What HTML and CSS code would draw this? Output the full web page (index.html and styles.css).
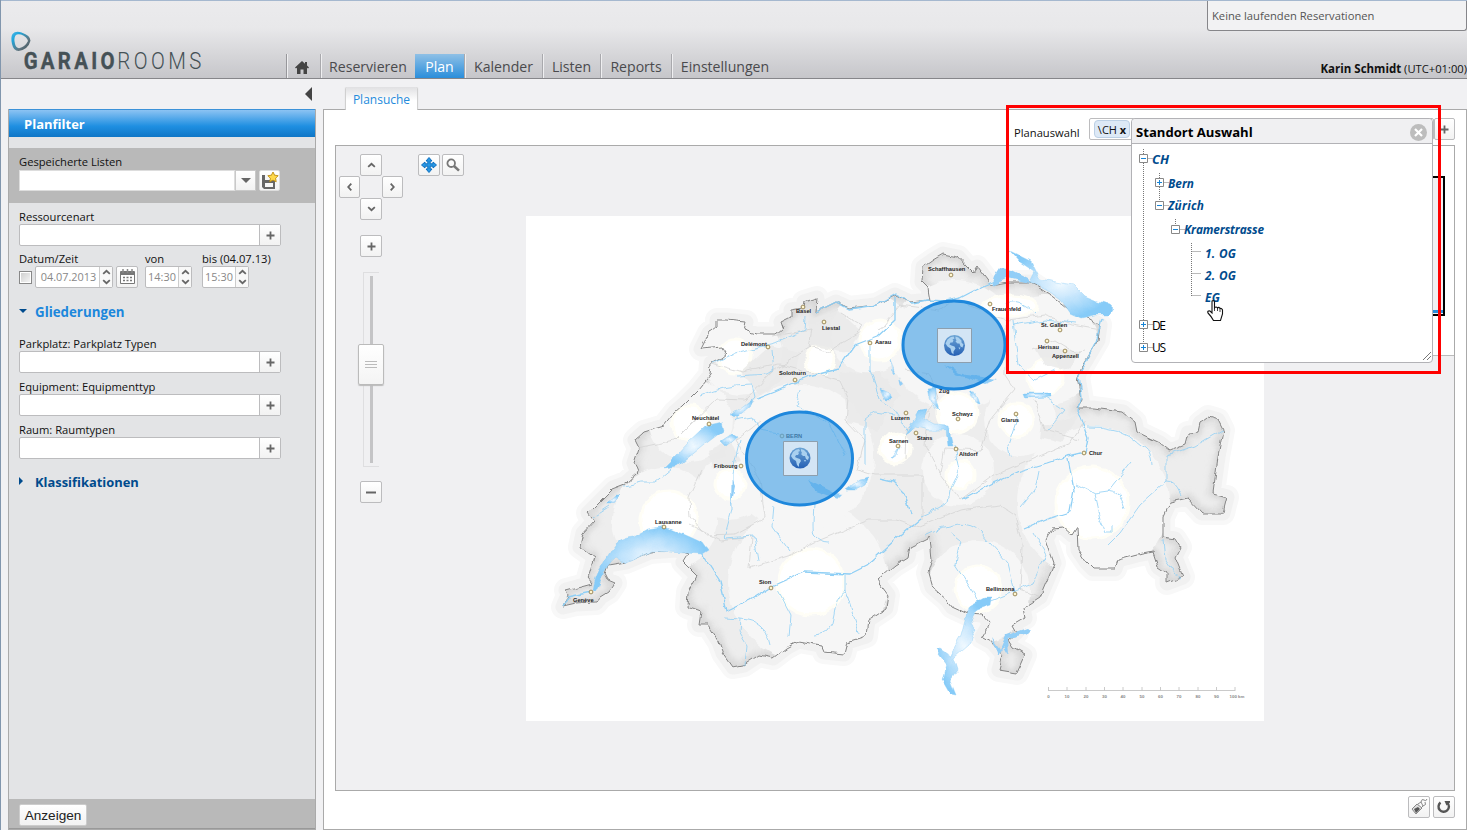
FILE: index.html
```html
<!DOCTYPE html>
<html lang="de">
<head>
<meta charset="utf-8">
<title>GARAIO ROOMS – Plan</title>
<link rel="stylesheet" href="styles.css">
</head>
<body>
<svg class="defs" aria-hidden="true">
  <symbol id="plus" viewBox="0 0 9 9"><path d="M4.5 .5v8M.5 4.5h8" stroke="#666" stroke-width="1.800"/></symbol>
  <symbol id="up" viewBox="0 0 10 6"><path d="M1.3 5 5 1.6 8.7 5" fill="none" stroke="#666" stroke-width="2"/></symbol>
  <symbol id="globe" viewBox="0 0 22 22">
    <circle cx="11" cy="11" r="10.500" fill="url(#gl)"/>
    <path d="M4 5q3-3 6-3l1 2-2 1 1 1-1 2-2 0-1 2 2 1 3 1 1 2-2 3 0 3-2-2-1-4-3-2-2-3zM12 2l3 1 3 3 0 2 2 2-1 3-2-1-1-3-2 0-2-2 1-1-1-2zM15 13l2 0-1 2z" fill="#a9d0ef"/>
  </symbol>
  <linearGradient id="gl" x2="0" y2="1"><stop stop-color="#6da5d5"/><stop offset="1" stop-color="#2560b4"/></linearGradient>
</svg>
<header class="header">
  <svg class="logo" width="200" height="46" viewBox="8 28 200 46">
    <defs><linearGradient id="lg" x1="0" x2="1" y2="1"><stop stop-color="#4fb8e8"/><stop offset=".25" stop-color="#1fa5db"/><stop offset=".65" stop-color="#607782"/><stop offset="1" stop-color="#37464c"/></linearGradient></defs>
    <path fill-rule="evenodd" fill="url(#lg)" d="M12.500 34q3-3.500 9-1.500q9 3 9 8.300q-2.500 9-12 10.200q-5 0-6.500-7q-1.500-7 .5-10zM15.500 35.500q-2 3-.5 8.500q1 4 4 4.200q6-1.200 9-7.200q-1-4.500-7-6.500q-4-1-5.500 1z"/>
    <g transform="scale(.85 1)"><text x="27.800" y="69.500" textLength="107" class="logo-b">GARAIO</text>
    <text x="138" y="69.500" textLength="99" class="logo-l">ROOMS</text></g>
  </svg>
  <nav class="nav">
    <a class="home"><svg width="14" height="13" viewBox="0 0 14 13"><path d="M7 0 0 6.500 1 7.500 2 6.800V13H5.500V8.500h3V13H12V6.800l1 .7 1-1L12 4.500V1H10v1.800z" fill="#444"/></svg></a>
    <a class="n1">Reservieren</a><a class="n2 active">Plan</a><a class="n3">Kalender</a><a class="n4">Listen</a><a class="n5">Reports</a><a class="n6">Einstellungen</a>
  </nav>
  <div class="notice">Keine laufenden Reservationen</div>
  <div class="user"><b>Karin Schmidt</b> (UTC+01:00)</div>
</header>
<main class="main">
  <div class="side">
    <div class="collapse"><i></i></div>
    <aside class="filter">
      <h2>Planfilter</h2>
      <div class="saved">
        <label>Gespeicherte Listen</label>
        <div class="row">
          <div class="select"><span></span><button><i class="caret"></i></button></div>
          <button class="sq save"><svg width="20" height="20" viewBox="0 0 20 20"><path d="M2 4h13v14H4l-2-2z" fill="#666"/><path d="M5 4h6v5H5zM5 12h8v4H5z" fill="#f7f7f7"/><path d="M13 1l1.600 3.200 3.600.5-2.600 2.500.6 3.600-3.200-1.700-3.200 1.700.6-3.600L7.800 4.700l3.600-.5z" fill="#ffd94a" stroke="#bd8c10" stroke-width=".9"/></svg></button>
        </div>
      </div>
      <div class="fields">
        <label class="l1">Ressourcenart</label>
        <div class="pick"><span></span><button><svg width="9" height="9"><use href="#plus"/></svg></button></div>
        <div class="labels"><label>Datum/Zeit</label><label>von</label><label>bis (04.07.13)</label></div>
        <div class="row when">
          <i class="check"></i>
          <div class="spin date"><span>04.07.2013</span><em><svg width="9" height="6"><use href="#up"/></svg><svg class="dn" width="9" height="6"><use href="#up"/></svg></em></div>
          <button class="sq cal"><svg width="15" height="16" viewBox="0 0 15 16"><path d="M.5 2.500h14v12H.5z" fill="#fff" stroke="#777"/><path d="M1 3h13v3H1z" fill="#777"/><path d="M3 0v4M7.500 0v4M12 0v4" stroke="#888" stroke-width="1.500"/><path d="M3 8.500h2M6.500 8.500h2M10 8.500h2M3 11.500h2M6.500 11.500h2M10 11.500h2" stroke="#777" stroke-width="1.700"/></svg></button>
          <div class="spin t1"><span>14:30</span><em><svg width="9" height="6"><use href="#up"/></svg><svg class="dn" width="9" height="6"><use href="#up"/></svg></em></div>
          <div class="spin t2"><span>15:30</span><em><svg width="9" height="6"><use href="#up"/></svg><svg class="dn" width="9" height="6"><use href="#up"/></svg></em></div>
        </div>
        <h3 class="open"><i></i>Gliederungen</h3>
        <label class="l2">Parkplatz: Parkplatz Typen</label>
        <div class="pick"><span></span><button><svg width="9" height="9"><use href="#plus"/></svg></button></div>
        <label class="l3">Equipment: Equipmenttyp</label>
        <div class="pick"><span></span><button><svg width="9" height="9"><use href="#plus"/></svg></button></div>
        <label class="l3">Raum: Raumtypen</label>
        <div class="pick"><span></span><button><svg width="9" height="9"><use href="#plus"/></svg></button></div>
        <h3 class="closed"><i></i>Klassifikationen</h3>
      </div>
      <div class="foot"><button>Anzeigen</button></div>
    </aside>
  </div>
  <section class="work">
    <div class="tab">Plansuche</div>
    <div class="panel">
      <div class="choose"><span class="ct">Planauswahl</span><div class="chips"><b class="chip">\CH <strong>x</strong></b></div><button><svg width="9" height="9"><use href="#plus"/></svg></button></div>
      <div class="canvas">
        <div class="tools">
          <div class="pad">
            <button class="pu"><svg width="9" height="6"><use href="#up"/></svg></button>
            <button class="pl"><svg width="9" height="6"><use href="#up"/></svg></button>
            <button class="pr"><svg width="9" height="6"><use href="#up"/></svg></button>
            <button class="pd"><svg width="9" height="6"><use href="#up"/></svg></button>
          </div>
          <button class="sq zin"><svg width="9" height="9"><use href="#plus"/></svg></button>
          <div class="slider"><i class="rail"></i><i class="knob"></i></div>
          <button class="sq zout"><svg width="10" height="3"><path d="M0 1.500h10" stroke="#666" stroke-width="2"/></svg></button>
        </div>
        <div class="modes">
          <button class="sq"><svg width="16" height="16" viewBox="0 0 16 16"><path d="M8 .5 11 4H9.200v2.800H12V5l3.500 3L12 11V9.200H9.200V12H11l-3 3.500L5 12h1.800V9.200H4V11L.5 8 4 5v1.800h2.800V4H5z" fill="#2797e3" stroke="#0d6fc0"/></svg></button>
          <button class="sq"><svg width="14" height="14" viewBox="0 0 14 14"><circle cx="5.200" cy="5.200" r="3.800" fill="none" stroke="#777" stroke-width="1.800"/><path d="M8 8l5 4.700" stroke="#777" stroke-width="2.500"/></svg></button>
        </div>
        <svg class="map" width="738" height="505" viewBox="526 216 738 505">
          <defs>
            <filter id="jag" x="-5%" y="-5%" width="110%" height="110%"><feTurbulence type="fractalNoise" baseFrequency=".11" numOctaves="1" seed="4"/><feDisplacementMap in="SourceGraphic" scale="7" xChannelSelector="R" yChannelSelector="G"/></filter>
            <filter id="soft"><feGaussianBlur stdDeviation="3"/></filter>
            <radialGradient id="lake"><stop offset="0" stop-color="#f0f9ff"/><stop offset=".35" stop-color="#d0eafd"/><stop offset="1" stop-color="#86cbf8"/></radialGradient>
            <path id="ch" d="M817 298 804 302 803 308 791 310 791 317 781 322 783 328 776 334 756 334 744 330 746 322 726 320 717 320 717 327 709 333 701 349 723 347 727 353 721 358 711 363 710 375 698 390 683 405 675 412 664 426 644 432 635 440 639 448 634 463 638 472 626 483 613 488 588 513 594 521 583 533 580 547 594 557 588 578 592 583 566 590 568 595 563 607 576 604 596 603 601 597 609 592 615 583 608 580 605 574 608 565 626 562 650 552 676 550 688 554 683 562 697 576 688 592 687 607 701 612 699 625 708 625 719 642 723 653 733 667 744 665 759 655 773 658 786 648 799 641 821 645 824 652 844 654 847 642 866 636 868 620 886 608 888 595 877 580 895 565 908 557 910 547 930 537 932 560 928 573 932 587 947 600 952 607 967 614 983 615 990 623 982 637 993 643 1003 655 999 670 1017 673 1025 655 1013 648 1008 640 1017 632 1013 625 1025 618 1023 608 1040 597 1048 578 1054 563 1046 540 1052 528 1063 527 1072 535 1077 527 1078 550 1087 563 1093 569 1115 569 1118 560 1137 555 1153 552 1158 567 1167 573 1167 583 1183 577 1175 557 1180 547 1175 539 1163 537 1163 517 1170 502 1188 498 1202 513 1223 513 1227 497 1213 493 1218 457 1223 430 1218 420 1208 417 1200 423 1198 432 1188 433 1185 445 1170 451 1160 443 1137 432 1135 422 1123 412 1093 408 1077 408 1082 400 1078 377 1082 367 1098 340 1100 325 1083 315 1070 310 1053 297 1030 282 1008 282 990 285 987 280 977 267 973 273 965 265 958 257 943 254 933 260 923 267 922 282 928 288 930 300 910 302 895 295 876 305 849 308 836 302 816 312Z"/>
            <clipPath id="in"><use href="#ch"/></clipPath>
          </defs>
          <use href="#ch" fill="none" stroke="#f8f8f8" stroke-width="24" stroke-linejoin="round"/>
          <use href="#ch" fill="none" stroke="#f1f1f1" stroke-width="15" stroke-linejoin="round"/>
          <g filter="url(#jag)">
          <use href="#ch" fill="#ededed"/>
          <g clip-path="url(#in)">
            <use href="#ch" fill="none" stroke="#d6d6d6" stroke-width="8" filter="url(#soft)"/>
            <g fill="#f6f6f6">
              <circle cx="665" cy="519" r="52"/><circle cx="808" cy="582" r="80"/><circle cx="1093" cy="502" r="76"/><circle cx="978" cy="592" r="52"/><circle cx="800" cy="458" r="74"/><circle cx="730" cy="488" r="32"/><circle cx="690" cy="420" r="42"/><circle cx="740" cy="353" r="42"/><circle cx="870" cy="333" r="40"/><circle cx="1045" cy="350" r="55"/><circle cx="958" cy="470" r="36"/><circle cx="955" cy="345" r="65"/><circle cx="1020" cy="420" r="36"/>
            </g>
            <g fill="#fff" stroke="#fffef6" stroke-width="3">
              <circle cx="669" cy="519" r="28"/><circle cx="811" cy="582" r="33"/><circle cx="1092" cy="503" r="36"/><circle cx="978" cy="589" r="23"/><circle cx="730" cy="484" r="15"/><circle cx="690" cy="424" r="18"/><circle cx="735" cy="356" r="17"/><circle cx="820" cy="360" r="14"/><circle cx="880" cy="340" r="20"/><circle cx="960" cy="475" r="14"/><circle cx="957" cy="413" r="20"/><circle cx="1016" cy="420" r="17"/><ellipse cx="1010" cy="306" rx="28" ry="10"/><circle cx="895" cy="448" r="15"/><circle cx="1045" cy="378" r="18"/>
            </g>
            <g fill="#e9e9e9">
              <path d="M808 320 838 310 862 332 848 352 812 346zM840 373 880 372 900 394 878 430 848 422 845 398zM770 345 800 352 795 370 760 395 740 372zM708 450 730 440 740 462 712 470zM1035 348 1080 350 1070 370 1045 365zM1080 415 1060 443 1040 438 1042 425z" opacity=".8"/>
            </g>
          </g>
          <g fill="none" stroke="#d4d4d4" stroke-width=".8">
            <path d="M637 448 675 440 690 425 717 399 745 400 772 372 798 355 812 346M712 363 742 372 780 364 840 380 848 398 846 420 865 440 857 470 874 475M772 336 812 330 809 347 827 352 858 334 861 325 840 312M702 470 689 498 690 517 705 535 735 534 765 518 760 480 735 440 760 422M690 525 720 540 752 536 749 568 790 555 815 542 870 520 895 520 920 527 960 510 1000 505 1015 515 1022 545 1020 590 1040 597M874 475 922 475 922 520M930 410 925 445 940 474 960 500 990 478 1035 458 1070 443 1085 420M940 474 945 448 980 450 990 420 1015 390 1005 375 1005 320 955 300 940 310 900 305 880 330M905 370 930 374 938 398 925 415 906 430 905 460M1008 320 1045 315 1072 325 1100 330M1033 350 1055 340 1075 352 1085 350M1035 400 1045 430 1080 440"/>
          </g>
          <use href="#ch" fill="none" stroke="#858585" stroke-width="1"/>
          <g class="river">
            <path stroke-width="1.300" d="M816 312 836 302 849 309 876 305 895 294 912 303 928 300 945 301 960 298 985 285 1006 277M895 297 895 320 878 336 855 345 850 352 838 369 808 377 775 392 757 399M698 548 707 562 720 582 727 611 750 600 771 587 804 572 850 574 866 566 895 540 921 518M962 499 993 483 1020 471 1047 463 1068 456 1085 452 1088 438 1077 410 1082 397 1079 375 1096 342 1102 318M1068 458 1074 490 1070 512 1045 520 1024 529M880 479 893 482 905 494 911 514M563 607 568 597 591 592"/>
            <path d="M806 315 805 330 775 343 735 353 712 363M772 350 774 370 768 374 737 376M701 396Q725 385 752 385L755 397 735 420 752 417 758 430 780 433M625 486 642 482 655 482 672 468M593 517 610 506M740 440 732 473 732 510 724 538 754 536 758 560M774 505 772 527 785 545 790 552M814 505Q812 530 814 535Q820 542 828 542M870 345 870 370 880 400 895 410 908 432M865 465 865 420 875 412 895 415M800 390 796 405 810 412 830 425 845 455M725 618 740 619 739 632 747 645 745 665M740 619Q765 620 770 645M778 590 791 615 789 636M845 575 845 590Q836 595 834 615Q832 635 814 635M845 590 859 632M955 445 960 470 950 490 948 502 930 512 921 516M925 535Q965 515 980 532L1008 563 1015 592M950 532 960 540 955 565 978 600M988 602 1013 592 1033 584 1046 555 1033 532M1039 470 1035 490 1020 508M1076 484 1094 493 1108 491 1131 462M1094 493 1100 520 1105 532 1113 532 1113 525M1108 490Q1120 490 1125 509M1087 427Q1120 425 1140 445Q1152 450 1152 465M1222 430 1195 446 1167 455 1167 481 1140 505 1120 533 1108 545M1167 481Q1175 480 1182 495M1164 540 1166 560 1180 580M1018 415 1008 445 1010 456M1042 395 1065 410 1048 430M1013 320 1018 365 1035 380 1055 370M1013 325 1045 320 1075 323M1005 303Q1020 298 1035 315"/>
          </g>
          <g fill="url(#lake)" stroke="#8accf6" stroke-width=".4">
            <path d="M593 590Q595 577 600 569L612 549Q618 538 634 537L648 529 665 526 690 537 703 543 708 550 702 554 652 551 626 563 616 557Q606 565 602 578L595 592z"/>
            <path d="M664 468 675 457 687 444 705 427 722 423 724 430 704 445 678 466z"/>
            <path d="M730 415 742 406 752 398 749 408 739 416z"/>
            <path d="M1009 250 1031 261 1040 279 1073 285 1085 297 1095 301 1108 305 1113 310 1110 315 1095 315 1081 318 1070 313 1061 300 1050 292 1030 282 1035 272 1020 262z"/>
            <path d="M967 613 971 605 984 598 991 598 990 605 978 609 970 622 976 631 968 645 953 658 957 670 950 680 956 695 951 694 943 680 947 665 936 650 941 649 950 655 961 636z"/>
            <path d="M721 441 732 434 737 437 726 446z"/><path d="M846 490 860 480 869 478 866 484 855 490z"/><path d="M607 504 616 496 620 496 612 504z"/>
            <path d="M928 388 936 387 936 402 939 411 931 402z"/><path d="M1022 393 1050 393 1051 397 1024 398z"/><path d="M891 458 900 447 897 454z"/><path d="M880 389 888 393 891 399 884 399z"/><path d="M905 434 920 410 927 409 924 418 935 424 948 425 953 446 948 446 946 430 930 430 915 427z"/><path d="M970 391 976 393 980 404 976 403z"/><path d="M891 358 895 372 893 375z"/>
          </g>
          <g class="lake">
            <path d="M995 276 1000 268 1012 270 1028 278 1030 283 1008 278 992 286zM732 479 735 486 731 508zM898 378 903 385 900 387zM992 638 1000 649 1006 635 1027 628 1030 630 1026 634 1008 638 1009 654 1004 646 998 656zM808 480 835 493 843 494 838 499 815 491zM944 365 965 375 998 379 985 384 955 374z"/>
          </g>
          </g>
          <g class="towns">
            <g class="dots"><circle cx="803" cy="307" r="1.900"/><circle cx="824" cy="322" r="1.900"/><circle cx="768" cy="347" r="1.900"/><circle cx="870" cy="343" r="1.900"/><circle cx="795" cy="380" r="1.900"/><circle cx="709" cy="424" r="1.900"/><circle cx="741" cy="466" r="1.900"/><circle cx="664" cy="527" r="1.900"/><circle cx="591" cy="592" r="1.900"/><circle cx="771" cy="588" r="1.900"/><circle cx="951" cy="275" r="1.900"/><circle cx="990" cy="304" r="1.900"/><circle cx="1060" cy="330" r="1.900"/><circle cx="1047" cy="341" r="1.900"/><circle cx="1065" cy="351" r="1.900"/><circle cx="906" cy="413" r="1.900"/><circle cx="958" cy="419" r="1.900"/><circle cx="1016" cy="414" r="1.900"/><circle cx="916" cy="433" r="1.900"/><circle cx="898" cy="446" r="1.900"/><circle cx="956" cy="449" r="1.900"/><circle cx="1084" cy="453" r="1.900"/><circle cx="1015" cy="594" r="1.900"/><circle cx="782" cy="436" r="1.900"/></g>
            <text x="796" y="313">Basel</text><text x="822" y="330">Liestal</text><text x="741" y="346">Delémont</text><text x="875" y="344">Aarau</text><text x="779" y="375">Solothurn</text><text x="692" y="420">Neuchâtel</text><text x="714" y="468">Fribourg</text><text x="655" y="524">Lausanne</text><text x="573" y="602">Genève</text><text x="759" y="584">Sion</text><text x="928" y="271">Schaffhausen</text><text x="992" y="311">Frauenfeld</text><text x="1041" y="327">St. Gallen</text><text x="1038" y="349">Herisau</text><text x="1052" y="358">Appenzell</text><text x="939" y="393">Zug</text><text x="891" y="420">Luzern</text><text x="952" y="416">Schwyz</text><text x="1001" y="422">Glarus</text><text x="917" y="440">Stans</text><text x="889" y="443">Sarnen</text><text x="959" y="456">Altdorf</text><text x="1089" y="455">Chur</text><text x="986" y="591">Bellinzona</text><text x="786" y="438">BERN</text>
          </g>
          <path d="M1048.500 690.500H1235M1048.500 687v4M1067 687v4M1086 687v4M1104.500 687v4M1123 687v4M1142 687v4M1160.500 687v4M1179 687v4M1198 687v4M1216.500 687v4M1235 687v4" stroke="#c4c4c4" fill="none" stroke-width=".9"/>
          <g class="scale"><text x="1048.500" y="698">0</text><text x="1067" y="698">10</text><text x="1086" y="698">20</text><text x="1104.500" y="698">30</text><text x="1123" y="698">40</text><text x="1142" y="698">50</text><text x="1160.500" y="698">60</text><text x="1179" y="698">70</text><text x="1198" y="698">80</text><text x="1216.500" y="698">90</text><text x="1237" y="698">100 km</text></g>
          <g fill="#4ea6e6" fill-opacity=".66" stroke="#1e87dc" stroke-width="3"><ellipse cx="799.500" cy="458.500" rx="53" ry="46.500"/><ellipse cx="954" cy="345" rx="51" ry="44"/></g>
          <g fill="#e4edf6" fill-opacity=".82" stroke="#8d9fae"><path d="M783.500 441.500h34v34h-34zM937.500 328.500h34v34h-34z"/></g>
          <use href="#globe" x="789" y="447" width="22" height="22"/><use href="#globe" x="943.500" y="334.500" width="22" height="22"/>
        </svg>
        <div class="overview"><i></i></div>
      </div>
      <div class="bottom">
        <button class="sq"><svg width="18" height="18" viewBox="0 0 18 18"><path d="M2 11l5-5 5 4-6 6z" fill="#ddd" stroke="#888"/><path d="M4 11l4-2 2 2-4 4z" fill="#555"/><path d="M8 6l3-2 2 4-2 2M11 4q1-4 3-2t3-1M13 8q4-1 2-4" fill="none" stroke="#888"/></svg></button>
        <button class="sq"><svg width="14" height="14" viewBox="0 0 14 14"><path d="M3.500 2.500A5.200 5.200 0 1 0 10.500 3" fill="none" stroke="#555" stroke-width="2.400"/><path d="M7.500 1h5.500v1.500l-3.500 3z" fill="#555"/></svg></button>
      </div>
    </div>
  </section>
</main>
<div class="dialog">
  <div class="dhead"><span>Standort Auswahl</span><svg width="17" height="17" viewBox="0 0 17 17"><circle cx="8.500" cy="8.500" r="8.500" fill="#bdbdbd"/><path d="M5 5l7 7M12 5l-7 7" stroke="#fff" stroke-width="2.200"/></svg></div>
  <svg class="tree" width="300" height="218" viewBox="1132 144 300 218">
    <g stroke="#777" stroke-dasharray="1 1" fill="none"><path d="M1143.500 149v199M1143.500 158.500h9M1143.500 324.500h9M1143.500 347.500h9M1159.500 173v33M1159.500 182.500h9M1159.500 205.500h9M1175.500 219v10M1175.500 229.500h9M1191.500 243v53M1191.500 251.500h9M1191.500 273.500h9M1191.500 295.500h9"/></g>
    <g fill="#fff" stroke="#888"><path d="M1139.500 154.500h8v8h-8zM1155.500 178.500h8v8h-8zM1155.500 201.500h8v8h-8zM1171.500 225.500h8v8h-8zM1139.500 320.500h8v8h-8zM1139.500 343.500h8v8h-8z"/></g>
    <path stroke="#1784d6" d="M1141 158.500h5M1157 182.500h5M1159.500 180v5M1157 205.500h5M1173 229.500h5M1141 324.500h5M1143.500 322v5M1141 347.500h5M1143.500 345v5"/>
    <g class="sel"><text x="1152" y="164" textLength="17" lengthAdjust="spacingAndGlyphs">CH</text><text x="1168" y="188" textLength="26">Bern</text><text x="1168" y="210" textLength="36">Zürich</text><text x="1184" y="234" textLength="80">Kramerstrasse</text><text x="1205" y="258" textLength="31">1. OG</text><text x="1205" y="280" textLength="31">2. OG</text><text x="1205" y="302" textLength="15">EG</text></g>
    <g class="plain"><text x="1152" y="330" textLength="14">DE</text><text x="1152" y="352" textLength="14">US</text></g>
    <path d="M1423 360l8-8M1427 360l4-4" stroke="#777"/>
  </svg>
</div>
<svg class="cursor" width="18" height="22" viewBox="0 0 18 22"><path d="M6 1Q8 0 8.500 2V8Q10 6 11.500 8 13 6.500 14 8.500 16 8 16.500 10V14L14.500 20.500H7.500Q5 16 2 13 1 10.500 4 11L6 13z" fill="#fff" stroke="#111" stroke-width="1.100"/><path d="M8.500 8v3M11.500 8v3M14 9v3" stroke="#111" stroke-width=".8"/></svg>
<div class="marker"></div>
</body>
</html>
```
FILE: styles.css
```css
* { box-sizing: border-box; }
body { margin: 0; width: 1467px; height: 830px; overflow: hidden; position: relative; background: #f1f1f3; font: 11.2px/14px "Open Sans", "Noto Sans", sans-serif; color: #111; border-left: 1px solid #8196ad; }
button { margin: 0; padding: 0; border: 1px solid #bcbcbe; border-radius: 2px; background: linear-gradient(#fff, #f2f2f2); display: flex; align-items: center; justify-content: center; }
i, em { font-style: normal; display: block; }
svg { display: block; flex: none; }
.defs { position: absolute; width: 0; height: 0; }
.header { height: 79px; display: flex; align-items: flex-end; border-top: 1px solid #a5b8cf; border-bottom: 1px solid #86868a; background: linear-gradient(#ebebed 0, #e8e8ea 35%, #c6c6ca 100%); position: relative; }
.logo { margin: 0 0 4px 7px; }
.logo-b { font: 700 24px Roboto, sans-serif; fill: #455156; stroke: #455156; stroke-width: .4; }
.logo-l { font: 300 24px Roboto, sans-serif; fill: #455156; }
.nav { display: flex; height: 24px; margin-left: 78px; font-size: 14.1px; line-height: 26px; color: #4a4a4d; }
.nav a { border-left: 1px solid #a9a9ad; box-shadow: inset 1px 0 #efeff1; text-align: center; white-space: nowrap; }
.home { width: 34px; display: flex; align-items: center; justify-content: center; }
.nav .home { border-left: 1px solid #97979b; padding: 2px 3px 0 0; }
.n1 { width: 95px; } .n2 { width: 49px; } .n3 { width: 78px; } .n4 { width: 58px; } .n5 { width: 71px; } .n6 { width: 107px; }
.nav .active { color: #fff; border: 0; background: linear-gradient(#8fc0e6, #2a8edb); box-shadow: none; }
.notice { position: absolute; right: 0; top: 0; width: 260px; height: 30px; padding: 8px 4px; border: 1px solid #86868a; border-top: 0; border-radius: 0 0 3px 3px; background: #f2f2f3; color: #555; }
.user { margin-left: auto; line-height: 19px; white-space: nowrap; }
.user b { font-size: 11.5px; }
.main { display: flex; height: 751px; }
.side { width: 322px; padding: 0 7px; }
.collapse { height: 30px; padding: 8px 4px; display: flex; justify-content: flex-end; }
.collapse i { border: 7px solid transparent; border-right: 7px solid #444; border-left: 0; height: 0; }
.filter { width: 308px; height: 721px; border: 1px solid #aaa; border-top: 0; background: #e3e4e6; display: flex; flex-direction: column; }
.filter h2 { margin: 0 0 11px; height: 28px; padding-left: 15px; color: #fff; font-size: 13px; line-height: 28px; background: linear-gradient(#8cc3f3, #1f8fe1 60%, #0f76c6); border-top: 1px solid #3c92d8; }
.filter label { display: block; height: 14px; white-space: nowrap; }
.saved { height: 55px; background: #b9b9b9; padding: 7px 10px; }
.row { display: flex; align-items: center; }
.saved .row { margin-top: 1px; height: 21px; gap: 3px; }
.select, .pick { display: flex; height: 21px; background: #fff; }
.select { width: 237px; }
.select span, .pick span { flex: 1; }
.select span { border: 1px solid #ddd; }
.select button { width: 21px; border-color: #c9c9c9; border-radius: 0; }
.caret { border: 5px solid transparent; border-top-color: #666; border-bottom: 0; }
.sq { width: 22px; height: 22px; }
.save { height: 21px; width: 21px; border-color: #ddd; }
.fields { flex: 1; padding: 7px 10px; }
.l1 { margin: 0; }
.pick { width: 262px; height: 22px; border: 1px solid #bcbcbe; border-radius: 2px; }
.pick button { width: 21px; border-width: 0 0 0 1px; border-radius: 0; }
.labels { display: flex; margin-top: 6px; }
.labels label:nth-child(1) { width: 126px; } .labels label:nth-child(2) { width: 57px; }
.when { margin-top: 0; height: 22px; }
.check { width: 13px; height: 13px; border: 1px solid #888; box-shadow: inset 0 0 0 1px #fff; background: linear-gradient(135deg, #ccc, #f8f8f8); margin-right: 3px; }
.spin { height: 22px; display: flex; background: #fff; border: 1px solid #bcbcbe; border-radius: 2px; color: #888; line-height: 20px; font-size: 10.9px; }
.spin span { flex: 1; text-align: center; white-space: nowrap; }
.spin em { width: 13px; border-left: 1px solid #ccc; background: #f8f8f8; display: flex; flex-direction: column; justify-content: space-around; align-items: center; }
.dn { transform: rotate(180deg); }
.date { width: 78px; } .date span { padding-left: 2px; } .cal { margin: 0 7px 0 3px; } .t1 { width: 47px; margin-right: 10px; } .t2 { width: 47px; }
.fields h3 { margin: 13px 0 0; height: 20px; font-size: 12.9px; line-height: 20px; color: #004b8d; display: flex; }
.fields .open { color: #1c87dc; margin-top: 14px; font-size: 13.3px; }
.open i { width: 16px; height: 0; }
.open i::before { content: ""; display: block; margin-top: 7px; width: 0; border: 4px solid transparent; border-top-color: #004b8d; border-bottom: 0; }
.closed i { width: 16px; }
.closed i::before { content: ""; display: block; margin-top: 5px; width: 0; border: 4px solid transparent; border-left-color: #004b8d; border-right: 0; }
.l2 { margin: 15px 0 0; }
.l3 { margin: 7px 0 0; }
.foot { height: 30px; background: #b9b9b9; padding: 5px 10px; border-bottom: 1px solid #999; }
.foot button { width: 68px; height: 22px; border-color: #ccc; font: 13.6px "Liberation Sans", Arial, sans-serif; color: #222; }
.work { width: 1144px; padding-top: 8px; }
.tab { position: relative; z-index: 1; width: 71px; height: 23px; margin-left: 23px; text-align: center; font-size: 12px; line-height: 25px; color: #248bdc; background: linear-gradient(#e0e0e2, #fff 60%); border-radius: 2px 2px 0 0; box-shadow: -1px 0 1px #ccc, 1px 0 1px #ccc; clip-path: inset(0 -2px 0 -2px); }
.panel { height: 721px; margin-top: -1px; border: 1px solid #aaa; background: #fff; padding: 8px 11px 0; }
.choose { height: 27px; display: flex; justify-content: flex-end; }
.ct { margin: 8px 10px 0 0; width: 65px; white-space: nowrap; }
.chips { width: 345px; height: 22px; border: 1px solid #bcbcbe; border-radius: 2px; padding: 1px 4px; }
.chip { display: block; width: 36px; height: 18px; line-height: 17px; text-align: center; background: #dde9f6; border: 1px solid #bcd0e5; border-radius: 4px; font-weight: 400; font-size: 11px; white-space: nowrap; }
.choose button { width: 21px; height: 22px; }
.canvas { position: relative; height: 646px; border: 1px solid #aaa; background: #f0f0f2; }
.map { position: absolute; left: 190px; top: 70px; background: #fff; }
.tools { position: absolute; left: 3px; top: 8px; width: 64px; display: flex; flex-direction: column; align-items: center; }
.pad { display: grid; grid-template: repeat(3, 22px) / 21px 22px 21px; width: 64px; justify-content: center; }
.pu { grid-area: 1 / 2; } .pl { grid-area: 2 / 1; } .pr { grid-area: 2 / 3; } .pd { grid-area: 3 / 2; }
.pl svg { transform: rotate(-90deg); } .pr svg { transform: rotate(90deg); } .pd svg { transform: rotate(180deg); }
.zin { margin-top: 15px; }
.slider { position: relative; width: 16px; height: 195px; margin: 15px 0 14px; border: 1px solid #dedee0; border-right: 0; }
.rail { width: 3px; height: 187px; background: #c4c4c6; margin: 3px 0 0 6px; }
.knob { position: absolute; left: -6px; top: 71px; width: 26px; height: 41px; border: 1px solid #bbb; border-radius: 2px; background: linear-gradient(#bbb, #bbb) 6px 16px / 12px 1px no-repeat, linear-gradient(#bbb, #bbb) 6px 19px / 12px 1px no-repeat, linear-gradient(#bbb, #bbb) 6px 22px / 12px 1px no-repeat, linear-gradient(#fff, #f4f4f4); box-shadow: 0 1px 1px #bbb; }
.modes { position: absolute; left: 82px; top: 8px; display: flex; gap: 2px; }
.river { fill: none; stroke: #8fcff5; stroke-width: .8; stroke-linejoin: round; }
.lake { fill: #92cef7; }
.towns { font: 700 5.7px "Liberation Sans", Arial, sans-serif; fill: #222; }
.dots { fill: #fff6cf; stroke: #76602d; stroke-width: .7; }
.scale { font: 700 4.4px "Liberation Sans", Arial, sans-serif; fill: #888; text-anchor: middle; }
.overview { position: absolute; right: 0; top: 0; width: 252px; height: 210px; background: #fff; border-bottom: 1px solid #bbb; padding: 30px 9px; }
.overview i { height: 140px; border: 2px solid #000; background: linear-gradient(#2a8edb, #2a8edb) 0 132px / 100% 3px no-repeat, #f0f0f2; }
.bottom { display: flex; justify-content: flex-end; gap: 3px; padding-top: 5px; }
.dialog { position: absolute; left: 1130px; top: 118px; width: 302px; height: 245px; background: #fff; border: 1px solid #b2b2b6; border-radius: 4px; }
.dhead { height: 25px; background: #f0f0f2; border-bottom: 1px solid #b2b2b6; display: flex; justify-content: space-between; align-items: center; padding: 2px 5px 0 4px; font-weight: 700; font-size: 13.1px; color: #000; border-radius: 4px 4px 0 0; }
.sel { font: italic 700 11.8px "Open Sans", sans-serif; fill: #004b8d; }
.plain { font-size: 12px; fill: #000; }
.cursor { position: absolute; left: 1205px; top: 300px; }
.marker { position: absolute; left: 1005px; top: 105px; width: 435px; height: 269px; border: 3px solid #f00; }
```
